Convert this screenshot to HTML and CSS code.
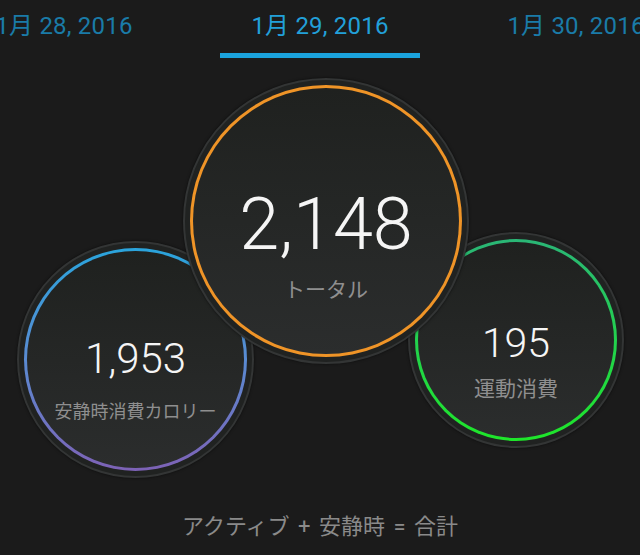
FILE: index.html
```html
<!DOCTYPE html>
<html lang="ja">
<head>
<meta charset="utf-8">
<link rel="stylesheet" href="styles.css">
</head>
<body>
<div class="tabs">
  <div class="tab"><span class="tab-label">1月 28, 2016</span></div>
  <div class="tab active"><span class="tab-label">1月 29, 2016</span><span class="indicator"></span></div>
  <div class="tab"><span class="tab-label">1月 30, 2016</span></div>
</div>
<div class="chart">
  <div class="bubble bubble-rest">
    <div class="ring ring-rest">
      <div class="face face-rest">
        <div class="num num-rest">1,953</div>
        <div class="label label-rest">安静時消費カロリー</div>
      </div>
    </div>
  </div>
  <div class="bubble bubble-active">
    <div class="ring ring-active">
      <div class="face face-active">
        <div class="num num-active">195</div>
        <div class="label label-active">運動消費</div>
      </div>
    </div>
  </div>
  <div class="bubble bubble-total">
    <div class="ring ring-total">
      <div class="face face-total">
        <div class="num num-total">2,148</div>
        <div class="label label-total">トータル</div>
      </div>
    </div>
  </div>
</div>
<div class="footer">アクティブ + 安静時 = 合計</div>
</body>
</html>
```
FILE: styles.css
```css
* { box-sizing: border-box; }
html, body {
  margin: 0;
  padding: 0;
  background: #1b1b1b;
  width: 640px;
  height: 555px;
  overflow: hidden;
  font-family: Roboto, "Noto Sans CJK JP", sans-serif;
}
.tabs {
  display: flex;
  justify-content: center;
  width: 640px;
  height: 60px;
  padding-top: 14px;
  overflow: hidden;
}
.tab {
  flex: 0 0 256px;
  display: flex;
  flex-direction: column;
  align-items: center;
}
.tab-label {
  font-size: 24px;
  line-height: 24px;
  color: #1a7ba8;
  white-space: nowrap;
  letter-spacing: 0.2px;
}
.tab.active .tab-label { color: #22a0d9; }
.indicator {
  display: block;
  width: 200px;
  height: 5px;
  margin-top: 15px;
  background: #1ba3dd;
}
.chart {
  position: relative;
  height: 440px;
}
.bubble {
  position: absolute;
  border-radius: 50%;
  padding: 5px;
  background: #202221;
  border: 2px solid #333535;
  box-shadow: 0 0 3px rgba(0,0,0,0.6);
}
.bubble-total { left: 183px; top: 18px; width: 286px; height: 286px; z-index: 3; }
.bubble-rest { left: 17px; top: 181px; width: 237px; height: 237px; z-index: 1; }
.bubble-active { left: 408px; top: 172px; width: 216px; height: 216px; z-index: 2; }
.ring {
  width: 100%;
  height: 100%;
  border-radius: 50%;
  padding: 3px;
}
.ring-total { background: #ef9427; }
.ring-rest { background: linear-gradient(180deg, #2aa4dc 0%, #5a8bd2 50%, #7d62b6 100%); }
.ring-active { background: linear-gradient(180deg, #2ab676 0%, #22d44a 55%, #1ee62a 100%); }
.face {
  width: 100%;
  height: 100%;
  border-radius: 50%;
  background: linear-gradient(180deg, #1f211f 0%, #252726 50%, #2b2d2d 100%);
  display: flex;
  flex-direction: column;
  align-items: center;
  justify-content: center;
}
.num {
  color: #f5f5f5;
  font-weight: 300;
  white-space: nowrap;
}
.label {
  color: #8f8f8f;
  white-space: nowrap;
}
.face-total { padding-top: 48px; }
.num-total { font-size: 72px; line-height: 70px; }
.label-total { font-size: 21px; line-height: 21px; margin-top: 20px; }
.face-rest { padding-top: 40px; }
.num-rest { font-size: 42px; line-height: 42px; }
.label-rest { font-size: 18px; line-height: 18px; margin-top: 23px; }
.face-active { padding-top: 42px; }
.num-active { font-size: 41px; line-height: 41px; }
.label-active { font-size: 21px; line-height: 21px; margin-top: 15px; }
.footer {
  margin-top: 16px;
  text-align: center;
  font-size: 22px;
  line-height: 22px;
  word-spacing: 3px;
  color: #8a8a8a;
  white-space: pre;
}
```
